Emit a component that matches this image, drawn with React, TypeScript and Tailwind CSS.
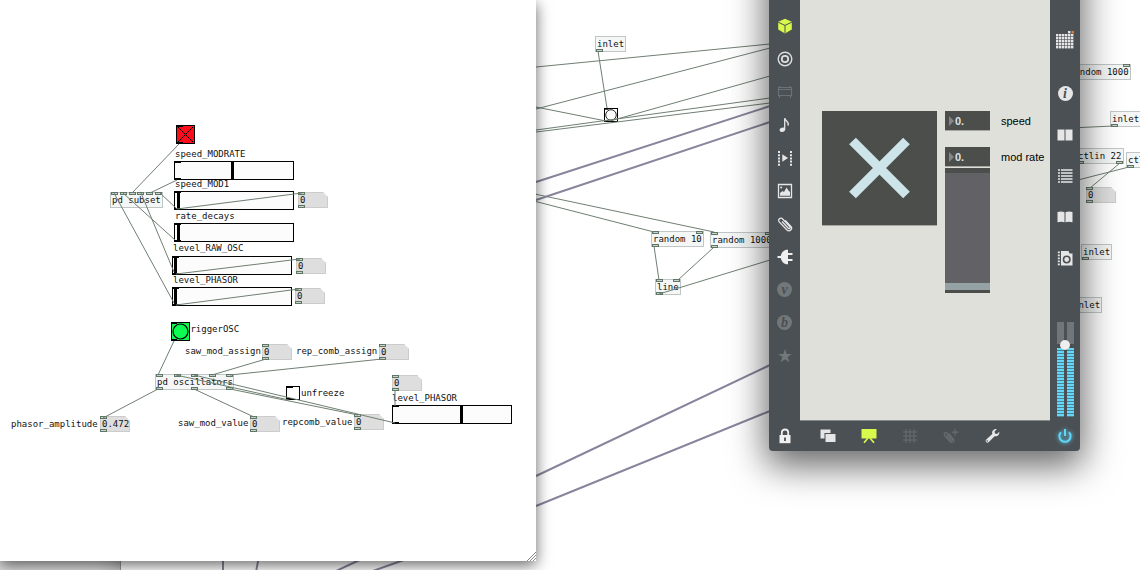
import { useState } from "react";
import type { ReactNode } from "react";

type Wire = [number, number, number, number];

const backWires: Wire[] = [
    [536, 67, 770, 44],
    [536, 109, 770, 48],
    [536, 107, 606, 121],
    [610, 121, 770, 76],
    [536, 130, 770, 98],
    [536, 132, 770, 103],
    [598, 51, 607, 108],
    [530, 193, 714, 232],
    [530, 200, 654, 232],
    [654, 246, 659, 280],
    [713, 248, 678, 280],
    [659, 294, 770, 260],
    [1113, 126, 1070, 128],
    [1120, 163, 1090, 188],
    [1129, 167, 1070, 182],
];

const audioWires: Wire[] = [
    [536, 182, 770, 106],
    [536, 200, 770, 122],
    [536, 476, 770, 365],
    [536, 506, 770, 411],
    [223, 556, 223, 572],
    [259, 556, 256, 572],
    [368, 556, 334, 572],
    [415, 556, 370, 572],
];

const frontWires: Wire[] = [
    [179, 144, 132, 193],
    [177, 180, 150, 193],
    [160, 193, 177, 209],
    [177, 209, 302, 193],
    [123, 193, 175, 240],
    [141, 193, 174, 272],
    [114, 193, 174, 303],
    [176, 274, 300, 259],
    [176, 305, 299, 289],
    [174, 341, 158, 375],
    [158, 389, 103, 418],
    [266, 359, 212, 375],
    [382, 359, 230, 375],
    [194, 389, 254, 417],
    [176, 375, 289, 400],
    [194, 375, 395, 423],
    [230, 389, 358, 415],
    [395, 390, 395, 406],
];

function Wires({ wires, className }: { wires: Wire[]; className: string }) {
    return (
        <svg className={`absolute inset-0 w-full h-full pointer-events-none fill-none ${className}`}>
            {wires.map(([x1, y1, x2, y2], i) => (
                <line key={i} x1={x1} y1={y1} x2={x2} y2={y2} />
            ))}
        </svg>
    );
}

function Ports({ count, side }: { count: number; side: string }) {
    return (
        <span className={`absolute inset-x-0 flex justify-between ${side}`}>
            {Array.from({ length: count }, (_, i) => (
                <span key={i} className="w-[7px] h-[3px] border border-[#5f7565] bg-[#c9d3cb]" />
            ))}
        </span>
    );
}

function Obj({ at, ins = 0, outs = 0, children }: { at: string; ins?: number; outs?: number; children: ReactNode }) {
    return (
        <div className={`absolute flex items-center h-4 pl-px border border-[#c0c6c6] bg-[#f5f7f7] whitespace-nowrap ${at}`}>
            {children}
            <Ports count={ins} side="-top-px" />
            <Ports count={outs} side="-bottom-px" />
        </div>
    );
}

function Label({ at, id, children }: { at: string; id: string; children: ReactNode }) {
    return (
        <label htmlFor={id} className={`absolute whitespace-nowrap leading-3 ${at}`}>
            {children}
        </label>
    );
}

function NumBox({ at, id, value = "0" }: { at: string; id: string; value?: string }) {
    return (
        <div className={`absolute w-[30px] h-4 ${at}`}>
            <input
                id={id}
                aria-label={id}
                defaultValue={value}
                className="block w-full h-full pl-px border border-[#cccccc] bg-[#dedede] outline-none [clip-path:polygon(0_0,25px_0,100%_5px,100%_100%,0_100%)]"
            />
            <Ports count={1} side="top-0" />
            <Ports count={1} side="bottom-0" />
        </div>
    );
}

function HSlider({ at, id, value }: { at: string; id: string; value: number }) {
    return (
        <div className={`absolute w-[120px] h-[19px] border border-black bg-[#fcfcfc] ${at}`}>
            <input
                id={id}
                type="range"
                defaultValue={value}
                className="block w-full h-full appearance-none bg-transparent outline-none [&::-webkit-slider-thumb]:appearance-none [&::-webkit-slider-thumb]:w-[3px] [&::-webkit-slider-thumb]:h-[17px] [&::-webkit-slider-thumb]:bg-black"
            />
            <span className="absolute left-0 top-0 w-1.5 h-px bg-black pointer-events-none" />
            <span className="absolute left-0 bottom-0 w-1.5 h-px bg-black pointer-events-none" />
        </div>
    );
}

function Bang({ at, fill, id }: { at: string; fill: string; id: string }) {
    return (
        <button id={id} aria-label={id} className={`absolute border border-black ${at} ${fill}`}>
            <svg viewBox="0 0 20 20" className="block w-full h-full">
                <circle cx="10" cy="10" r="8.8" fill="none" stroke="#000" strokeWidth="1.4" />
                <path d="M0 .5h6M0 19.5h6" stroke="#000" strokeWidth="1.5" />
            </svg>
        </button>
    );
}

function BackPatch() {
    return (
        <div className="absolute inset-0 overflow-hidden">
            <div className="absolute left-[120px] right-0 inset-y-0 bg-white border-l border-[#999] shadow-[0_0_24px_rgba(0,0,0,0.4)]" />
            <Obj at="left-[595px] top-[36px] w-[31px]" outs={1}>inlet</Obj>
            <Bang at="left-[604px] top-[108px] size-[14px]" fill="bg-white" id="back bang" />
            <Obj at="left-[651px] top-[231px] w-[53px]" ins={2} outs={1}>random 10</Obj>
            <Obj at="left-[710px] top-[232px] w-[63px]" ins={2} outs={1}>random 1000</Obj>
            <Obj at="left-[655px] top-[279px] w-[26px]" ins={2} outs={1}>line</Obj>
            <Obj at="left-[1067px] top-[64px] w-[64px]" ins={2} outs={1}>random 1000</Obj>
            <Obj at="left-[1110px] top-[111px] w-[31px]" outs={1}>inlet</Obj>
            <Obj at="left-[1076px] top-[148px] w-[48px]" outs={2}>ctlin 22</Obj>
            <Obj at="left-[1126px] top-[152px] w-[48px]" outs={2}>ctl</Obj>
            <NumBox at="left-[1086px] top-[187px]" id="ctlin value" />
            <Obj at="left-[1081px] top-[244px] w-[31px]" outs={1}>inlet</Obj>
            <Obj at="left-[1071px] top-[297px] w-[31px]">inlet</Obj>
            <Wires wires={backWires} className="stroke-[#6f7f72] stroke-1" />
            <Wires wires={audioWires} className="stroke-[#87859c] stroke-2" />
        </div>
    );
}

function FrontPatch() {
    const [subset, setSubset] = useState(true);
    const [unfreeze, setUnfreeze] = useState(false);

    return (
        <div className="absolute left-0 top-0 w-[536px] h-[561px] bg-white shadow-[0_4px_14px_rgba(0,0,0,0.6)]">
            <label className="absolute left-[176px] top-[125px] size-[19px] border border-black bg-[#fc0d1b]">
                <input type="checkbox" aria-label="subset on" checked={subset} onChange={() => setSubset(!subset)} className="absolute inset-0 opacity-0" />
                {subset && (
                    <svg viewBox="0 0 17 17" className="block w-full h-full">
                        <path d="M1 1l15 15M16 1L1 16M0 .5h6M0 16.5h6" stroke="#000" />
                    </svg>
                )}
            </label>
            <Label at="left-[175px] top-[148px]" id="modrate">speed_MODRATE</Label>
            <HSlider at="left-[174px] top-[161px]" id="modrate" value={49} />
            <Label at="left-[175px] top-[178px]" id="mod1">speed_MOD1</Label>
            <HSlider at="left-[174px] top-[191px]" id="mod1" value={2} />
            <NumBox at="left-[298px] top-[192px]" id="mod1 value" />
            <Label at="left-[175px] top-[210px]" id="decays">rate_decays</Label>
            <HSlider at="left-[174px] top-[223px]" id="decays" value={2} />
            <Label at="left-[173px] top-[242px]" id="rawosc">level_RAW_OSC</Label>
            <HSlider at="left-[172px] top-[256px]" id="rawosc" value={1} />
            <NumBox at="left-[296px] top-[258px]" id="rawosc value" />
            <Label at="left-[173px] top-[274px]" id="phasor">level_PHASOR</Label>
            <HSlider at="left-[172px] top-[287px]" id="phasor" value={1} />
            <NumBox at="left-[295px] top-[288px]" id="phasor value" />
            <Obj at="left-[110px] top-[192px] w-[53px]" ins={6}>pd subset</Obj>

            <Label at="left-[185px] top-[323px]" id="trigger">triggerOSC</Label>
            <Bang at="left-[171px] top-[322px] size-[19px]" fill="bg-[#0dfc52]" id="trigger" />
            <Label at="left-[185px] top-[345px]" id="sawassign">saw_mod_assign</Label>
            <NumBox at="left-[262px] top-[344px]" id="sawassign" />
            <Label at="left-[296px] top-[345px]" id="repassign">rep_comb_assign</Label>
            <NumBox at="left-[379px] top-[344px]" id="repassign" />
            <Obj at="left-[155px] top-[374px] w-[79px]" ins={5} outs={3}>pd oscillators</Obj>

            <label className="absolute left-[286px] top-[386px] size-[14px] border border-black bg-white">
                <input id="unfreeze" type="checkbox" checked={unfreeze} onChange={() => setUnfreeze(!unfreeze)} className="absolute inset-0 opacity-0" />
                <svg viewBox="0 0 12 12" className="block w-full h-full">
                    <path d={unfreeze ? "M1 1l10 10M11 1L1 11" : "M0 .5h6M0 11.5h6"} stroke="#000" />
                </svg>
            </label>
            <Label at="left-[301px] top-[387px]" id="unfreeze">unfreeze</Label>
            <NumBox at="left-[392px] top-[375px]" id="level value" />
            <Label at="left-[392px] top-[392px]" id="level">level_PHASOR</Label>
            <HSlider at="left-[392px] top-[405px]" id="level" value={58} />

            <Label at="left-[11px] top-[418px]" id="amplitude">phasor_amplitude</Label>
            <NumBox at="left-[100px] top-[416px]" id="amplitude" value="0.472" />
            <Label at="left-[178px] top-[417px]" id="sawvalue">saw_mod_value</Label>
            <NumBox at="left-[250px] top-[416px]" id="sawvalue" />
            <Label at="left-[282px] top-[416px]" id="repvalue">repcomb_value</Label>
            <NumBox at="left-[354px] top-[414px]" id="repvalue" />

            <Wires wires={frontWires} className="stroke-[#6f7f72] stroke-1" />
            <svg viewBox="0 0 10 10" className="absolute right-0 bottom-0 size-2.5">
                <path d="M1 10L10 1M4 10l6-6M7 10l3-3" stroke="#888" />
            </svg>
        </div>
    );
}

function Icon({ children }: { children: ReactNode }) {
    return (
        <svg viewBox="0 0 16 16" className="size-4" fill="none" stroke="currentColor">
            {children}
        </svg>
    );
}

// round badge with an italic letter
function Letter({ children }: { children: ReactNode }) {
    return (
        <span className="flex items-center justify-center size-[15px] rounded-full bg-current font-['Liberation_Serif',serif] text-sm leading-3 font-bold italic">
            <span className="text-[#4b5054]">{children}</span>
        </span>
    );
}

const leftTools = [
    {
        name: "Objects",
        tone: "text-[#d9f94c]",
        icon: (
            <Icon>
                <path d="M8 .8l6.8 3v7.8L8 15.4l-6.8-3.8V3.8z" fill="currentColor" stroke="none" />
                <path d="M1.2 4.2L8 7.4l6.800-3.200M8 7.400v8" stroke="#4b5054" strokeWidth="1" />
            </Icon>
        ),
    },
    {
        name: "Target",
        tone: "text-[#dcdede]",
        icon: (
            <Icon>
                <circle cx="8" cy="8" r="6.8" strokeWidth="1.4" />
                <circle cx="8" cy="8" r="3.2" strokeWidth="1.8" />
            </Icon>
        ),
    },
    {
        name: "Devices",
        tone: "text-[#6c7175]",
        icon: (
            <Icon>
                <path d="M1.5 3.5h13v8h-13zM1.5 5.5h13M2.5 12v2M13.5 12v2M3 2v2M13 2v2" strokeWidth="1.2" />
            </Icon>
        ),
    },
    {
        name: "Audio",
        tone: "text-[#e6e6e6]",
        icon: (
            <Icon>
                <ellipse cx="5.4" cy="12.8" rx="2.8" ry="2.1" transform="rotate(-20 5.4 12.8)" fill="currentColor" stroke="none" />
                <path d="M7.700 12.500V1.200c.4 3 4.800 3.200 3.400 7.400" strokeWidth="1.300" />
            </Icon>
        ),
    },
    {
        name: "Video",
        tone: "text-[#e6e6e6]",
        icon: (
            <Icon>
                <path d="M2 1v15M14 1v15" strokeWidth="2" strokeDasharray="2 1.2" />
                <path d="M5.3 4.2L11 8l-5.7 3.8z" fill="currentColor" stroke="none" />
            </Icon>
        ),
    },
    {
        name: "Images",
        tone: "text-[#e6e6e6]",
        icon: (
            <Icon>
                <path d="M1.500 1.500h13v13h-13z" strokeWidth="1.300" />
                <path d="M3 12.800V10l2.500-2 1.500 1 2.500-4.500 2 3 1.500 1.500v3.800z" fill="currentColor" stroke="none" />
                <circle cx="4.200" cy="4.500" r="1" fill="currentColor" stroke="none" />
            </Icon>
        ),
    },
    {
        name: "Attachments",
        tone: "text-[#e6e6e6]",
        icon: (
            <Icon>
                <path d="M5 5.500l6.300 6.700c1 1 2.600-.4 1.600-1.500L5.700 3C3.500.8.200 3.700 2.400 6.100l7.300 7.700c2.800 2.700 6.600-.7 4-3.600L8.300 4.500" strokeWidth="1.300" />
            </Icon>
        ),
    },
    {
        name: "Plug-ins",
        tone: "text-[#f0f0f0]",
        icon: (
            <Icon>
                <path d="M.5 7h3.200C4.500 3.500 6.500 1.500 9.200.8H11V4h4.500v2H11v4h4.500v2H11v3.200H9.200C6.500 14.500 4.500 12.500 3.700 9H.5z" fill="currentColor" stroke="none" />
            </Icon>
        ),
    },
    { name: "Vizzie", tone: "text-[#72777a]", icon: <Letter>v</Letter> },
    { name: "Beap", tone: "text-[#72777a]", icon: <Letter>b</Letter> },
    {
        name: "Favorites",
        tone: "text-[#72777a]",
        icon: (
            <Icon>
                <path d="M8 1l1.700 5h5.100l-4.100 3.100 1.500 5.100L8 11.200l-4.200 3 1.500-5.100L1.200 6h5.100z" fill="currentColor" stroke="none" />
            </Icon>
        ),
    },
];

const rightTools = [
    { name: "Inspector", icon: <Letter>i</Letter> },
    {
        name: "Reference",
        icon: (
            <Icon>
                <path d="M.5 2.500h7v11h-7zM8.500 2.500h7v11h-7z" fill="currentColor" stroke="none" />
            </Icon>
        ),
    },
    {
        name: "Console",
        icon: (
            <Icon>
                <path d="M1 2h2M1 5h2M1 8h2M1 11h2M1 14h2M4 2h11.500M4 5h11.500M4 8h11.500M4 11h11.500M4 14h11.500" strokeWidth="1.500" />
            </Icon>
        ),
    },
    {
        name: "Lessons",
        icon: (
            <Icon>
                <path d="M.5 3c2.500-.8 5-.8 7 .3v10c-2-.8-4.500-.8-7 0zM15.500 3c-2.500-.8-5-.8-7 .3v10c2-.8 4.500-.8 7 0z" fill="currentColor" stroke="none" />
            </Icon>
        ),
    },
    {
        name: "Snapshots",
        icon: (
            <Icon>
                <path d="M4 1h7.500l1 2.500h3V15.500H4z" fill="currentColor" stroke="none" />
                <path d="M1.800 1.500v14" strokeWidth="2" strokeDasharray="1.800 1.200" />
                <circle cx="9.700" cy="9.500" r="3.200" stroke="#4b5054" strokeWidth="1.600" />
            </Icon>
        ),
    },
];

const bottomTools = [
    {
        name: "Windows",
        tone: "text-[#e6e6e6]",
        icon: (
            <Icon>
                <path d="M.5 1.500h10v3.500H4.500v5.500h-4z" fill="currentColor" stroke="none" />
                <path d="M5.500 6h10v8h-10z" fill="currentColor" stroke="none" />
            </Icon>
        ),
    },
    {
        name: "Presentation",
        tone: "text-[#d9f94c]",
        icon: (
            <Icon>
                <path d="M.500 1h15v9.500H.500z" fill="currentColor" stroke="none" />
                <path d="M7 10l-4 4.700M9 10l4 4.700" strokeWidth="1.700" />
            </Icon>
        ),
    },
    {
        name: "Grid",
        tone: "text-[#686d71]",
        icon: (
            <Icon>
                <path d="M4 1v14M8 1v14M12 1v14M1 4h14M1 8h14M1 12h14" />
            </Icon>
        ),
    },
    {
        name: "Add clip",
        tone: "text-[#686d71]",
        icon: (
            <Icon>
                <path d="M3.500 7l4.500 5c1 1 2-.2 1.200-1.200L4.500 5.500C2.500 3.500 0 5.500 2 8l5 5.500c2.200 2.300 5.200-.3 3.200-2.700L6 6M12 1v6.500M8.700 4.200h6.600" strokeWidth="1.200" />
            </Icon>
        ),
    },
    {
        name: "Settings",
        tone: "text-[#e6e6e6]",
        icon: (
            <Icon>
                <path d="M12.800 1.200L10.500 3.500l.5 2 2 .5 2.200-2.300c.6 2.800-1.700 5.200-4.600 4.500l-6 6.100c-1.500 1.400-4-.8-2.600-2.500l6.300-5.700C7.400 3.200 9.800.600 12.800 1.200z" fill="currentColor" stroke="none" />
                <circle cx="3.200" cy="13" r=".8" fill="#4b5054" stroke="none" />
            </Icon>
        ),
    },
];

function FloatBox({ id }: { id: string }) {
    return (
        <div className="flex items-center h-5 w-[45px] pl-1 gap-px bg-[#4b4e4b] border-b border-[#a5a7a2]">
            <svg viewBox="0 0 5 10" className="w-[5px] h-2.5 shrink-0">
                <path d="M0 0l5 5-5 5z" fill="#85888a" />
            </svg>
            <input id={id} defaultValue="0." className="min-w-0 w-full bg-transparent text-[#dfe2e4] font-bold outline-none" />
        </div>
    );
}

function Meter() {
    return (
        <div className="flex flex-col w-[7px]">
            <span className="h-[22px] bg-[#71767a]" />
            <span className="h-1 bg-[#4b5054]" />
            {Array.from({ length: 23 }, (_, i) => (
                <span key={i} className="h-[3px] bg-[#62d8fa] border-b border-[#4b8296]" />
            ))}
        </div>
    );
}

function MaxWindow() {
    return (
        <div className="absolute left-[769px] -top-16 w-[311px] pt-16 flex flex-col bg-[#4b5054] rounded-[4px] shadow-[0_12px_36px_3px_rgba(0,0,0,0.6)] font-['Liberation_Sans',sans-serif] text-[11px]">
            <div className="flex h-[421px]">
                <nav className="flex flex-col w-[31px] pt-[9px]">
                    {leftTools.map((t) => (
                        <button key={t.name} aria-label={t.name} className={`flex items-center justify-center h-[33px] ${t.tone}`}>
                            {t.icon}
                        </button>
                    ))}
                </nav>
                <main className="flex items-start flex-1 gap-[9px] pl-[22px] pt-[111px] bg-[#dfe0da] border-b border-[#85898a]">
                    <button aria-label="Toggle" className="size-[115px] -mr-px bg-[#4b4e4b] border-b border-[#a5a7a2]">
                        <svg viewBox="0 0 114 114" className="block w-full h-full">
                            <path d="M30 30l54 54M84 30L30 84" stroke="#cde5e9" strokeWidth="9.500" />
                        </svg>
                    </button>
                    <div className="flex flex-col">
                        <div className="flex items-center gap-[11px] text-black">
                            <FloatBox id="speed" />
                            <label htmlFor="speed">speed</label>
                        </div>
                        <div className="flex items-center gap-[11px] mt-4 text-black">
                            <FloatBox id="rate" />
                            <label htmlFor="rate" className="whitespace-nowrap">mod rate</label>
                        </div>
                        <div className="w-[45px] h-[125px] mt-px pt-[5px] pb-[3px] bg-[#4b4e4b]">
                            <input
                                type="range"
                                aria-label="mod rate level"
                                defaultValue={0}
                                className="block w-full h-full appearance-none bg-[#626266] outline-none [writing-mode:vertical-lr] [direction:rtl] [&::-webkit-slider-thumb]:appearance-none [&::-webkit-slider-thumb]:w-[45px] [&::-webkit-slider-thumb]:h-[7px] [&::-webkit-slider-thumb]:bg-[#94a2a5]"
                            />
                        </div>
                    </div>
                </main>
                <aside className="flex flex-col items-center w-[30px] pt-[31px] text-[#e6e6e6]">
                    <button aria-label="Calendar" className="mb-6">
                        <svg viewBox="0 0 18 18" className="block size-[18px]" fill="currentColor">
                            {[3, 6, 9, 12, 15].map((y) =>
                                [0, 3, 6, 9, 12, 15].map((x) => <path key={`${x}-${y}`} d={`M${x} ${y}h2.400v2.400h-2.400z`} />)
                            )}
                            <path d="M12 0h2.400v2.400h-2.400z" />
                            <path d="M15.500 0h2.500v2.500h-2.500z" fill="#e07b3c" />
                        </svg>
                    </button>
                    {rightTools.map((t) => (
                        <button key={t.name} aria-label={t.name} className="flex items-center justify-center h-[41px]">
                            {t.icon}
                        </button>
                    ))}
                    <div className="relative flex gap-[3px] mt-auto mb-1">
                        <Meter />
                        <Meter />
                        <span className="absolute left-1/2 top-[18px] size-[10px] -translate-x-1/2 rounded-full bg-[#eeeeee] shadow" />
                    </div>
                </aside>
            </div>
            <footer className="flex items-center h-[30px]">
                <button aria-label="Lock" className="flex justify-center w-[31px] text-[#f0f0f0]">
                    <Icon>
                        <path d="M2.500 7h11v8.200h-11z" fill="currentColor" stroke="none" />
                        <path d="M4.800 7.500V4.500c0-4 6.400-4 6.400 0v3" strokeWidth="1.800" />
                        <path d="M8 9.500v3.500" stroke="#4b5054" strokeWidth="1.800" />
                    </Icon>
                </button>
                <div className="flex ml-[7px]">
                    {bottomTools.map((t) => (
                        <button key={t.name} aria-label={t.name} className={`flex justify-center w-[41px] ${t.tone}`}>
                            {t.icon}
                        </button>
                    ))}
                </div>
                <button aria-label="Power" className="flex justify-center w-[30px] ml-auto text-[#5fd6f7] drop-shadow-[0_0_2px_#5fd6f7]">
                    <Icon>
                        <path d="M4 4.300a5.600 5.600 0 1 0 8 0M8 1v7" strokeWidth="2" />
                    </Icon>
                </button>
            </footer>
        </div>
    );
}

export default function App() {
    return (
        <div className="relative h-screen overflow-hidden bg-[#dcdcdc] font-['DejaVu_Sans_Mono',monospace] text-[9px] leading-3 text-[#111]">
            <BackPatch />
            <FrontPatch />
            <MaxWindow />
        </div>
    );
}
